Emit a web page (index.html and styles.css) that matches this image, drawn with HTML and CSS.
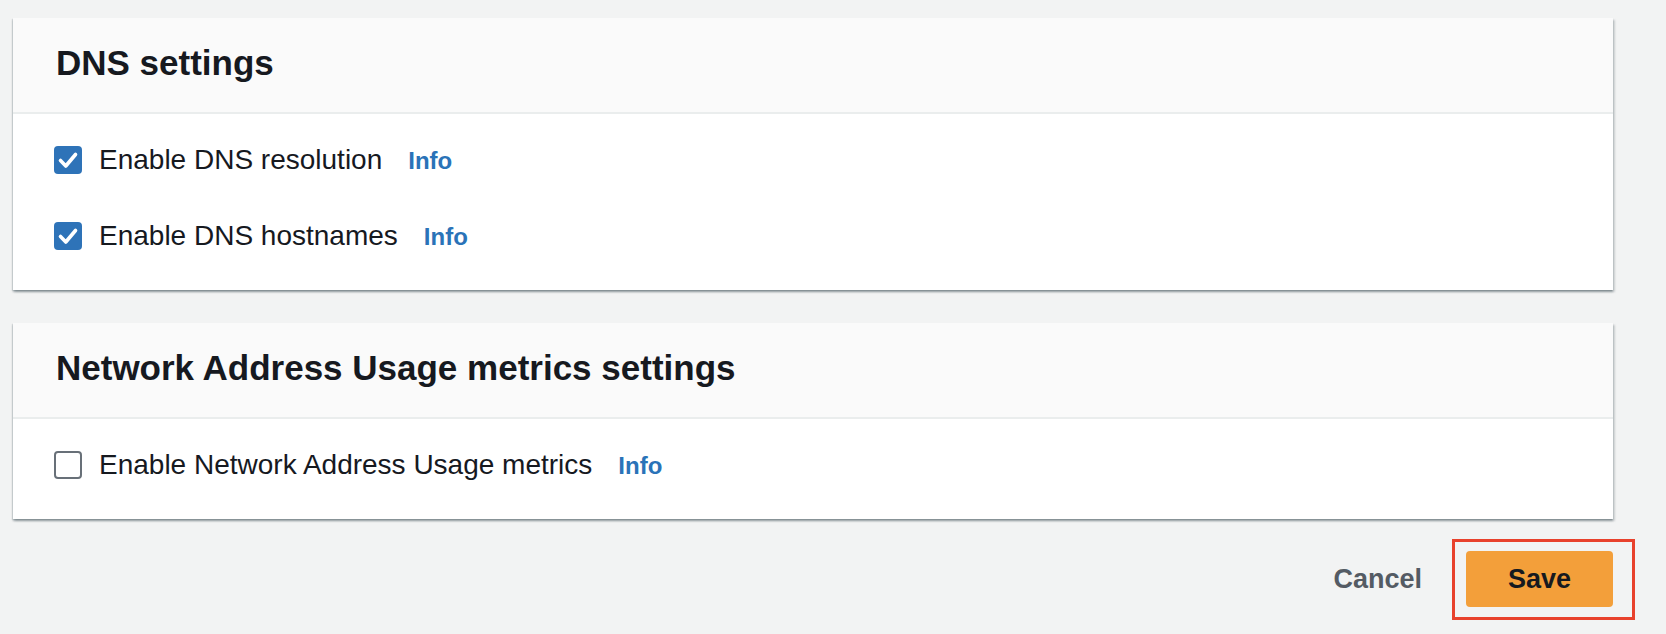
FILE: index.html
```html
<!DOCTYPE html>
<html lang="en">
<head>
<meta charset="utf-8">
<title>VPC settings</title>
<link rel="stylesheet" href="styles.css">
</head>
<body>
<main class="page">
  <section class="card">
    <header class="card-header"><h2 class="card-title">DNS settings</h2></header>
    <div class="card-body">
      <label class="option">
        <span class="box checked"><svg viewBox="0 0 28 28" width="28" height="28"><polyline points="6.5,14.5 11.8,20 21.5,8.5" fill="none" stroke="#fff" stroke-width="3.6" stroke-linecap="round" stroke-linejoin="round"/></svg></span>
        <span class="option-text">Enable DNS resolution<a class="info" href="#">Info</a></span>
      </label>
      <label class="option">
        <span class="box checked"><svg viewBox="0 0 28 28" width="28" height="28"><polyline points="6.5,14.5 11.8,20 21.5,8.5" fill="none" stroke="#fff" stroke-width="3.6" stroke-linecap="round" stroke-linejoin="round"/></svg></span>
        <span class="option-text">Enable DNS hostnames<a class="info" href="#">Info</a></span>
      </label>
    </div>
  </section>

  <section class="card">
    <header class="card-header"><h2 class="card-title">Network Address Usage metrics settings</h2></header>
    <div class="card-body">
      <label class="option">
        <span class="box"></span>
        <span class="option-text">Enable Network Address Usage metrics<a class="info" href="#">Info</a></span>
      </label>
    </div>
  </section>

  <div class="actions">
    <button class="btn-link" type="button">Cancel</button>
    <span class="highlight"><button class="btn-primary" type="button">Save</button></span>
  </div>
</main>
</body>
</html>
```

FILE: styles.css
```css
html, body {
  margin: 0;
  padding: 0;
  background: #f2f3f3;
}

body {
  font-family: "Liberation Sans", Arial, sans-serif;
  color: #16191f;
  min-height: 634px;
}

.page {
  padding: 18px 53px 26px 13px;
  display: flex;
  flex-direction: column;
}

.card {
  background: #ffffff;
  box-shadow: 0 2px 2px 0 rgba(0, 28, 36, 0.3), 2px 2px 2px 0 rgba(0, 28, 36, 0.15), -1px 1px 1px 0 rgba(0, 28, 36, 0.1);
  margin-bottom: 33px;
}

.card-header {
  background: #fafafa;
  border-bottom: 2px solid #eaeded;
  padding: 23px 42px 27px 43px;
}

.card-title {
  margin: 0;
  font-size: 35px;
  line-height: 44px;
  font-weight: 700;
  color: #16191f;
}

.card-body {
  padding: 26px 40px 34px 41px;
  display: flex;
  flex-direction: column;
  gap: 36px;
}

.option {
  display: flex;
  align-items: center;
  height: 40px;
  gap: 17px;
}

.box {
  width: 28px;
  height: 28px;
  box-sizing: border-box;
  border: 2px solid #687078;
  border-radius: 4px;
  background: #ffffff;
  flex: none;
  display: flex;
}

.box.checked {
  border: none;
  background: #2e73b8;
}

.option-text {
  font-size: 28px;
  line-height: 40px;
  color: #16191f;
}

.info {
  margin-left: 26px;
  font-size: 24px;
  font-weight: 700;
  color: #2a73b8;
  text-decoration: none;
}

.actions {
  display: flex;
  justify-content: flex-end;
  align-items: center;
  gap: 44px;
  margin-top: -1px;
}

.btn-link {
  border: none;
  background: none;
  padding: 0;
  font-family: inherit;
  font-size: 27px;
  font-weight: 700;
  color: #545b64;
}

.highlight {
  position: relative;
  display: flex;
}

.highlight::after {
  content: "";
  position: absolute;
  left: -14px;
  right: -22px;
  top: -12px;
  bottom: -13px;
  border: 3px solid #e8412c;
  pointer-events: none;
}

.btn-primary {
  width: 147px;
  height: 56px;
  border: none;
  border-radius: 4px;
  background: #f39f3a;
  font-family: inherit;
  font-size: 27px;
  font-weight: 700;
  color: #16191f;
  padding: 0;
}
```
